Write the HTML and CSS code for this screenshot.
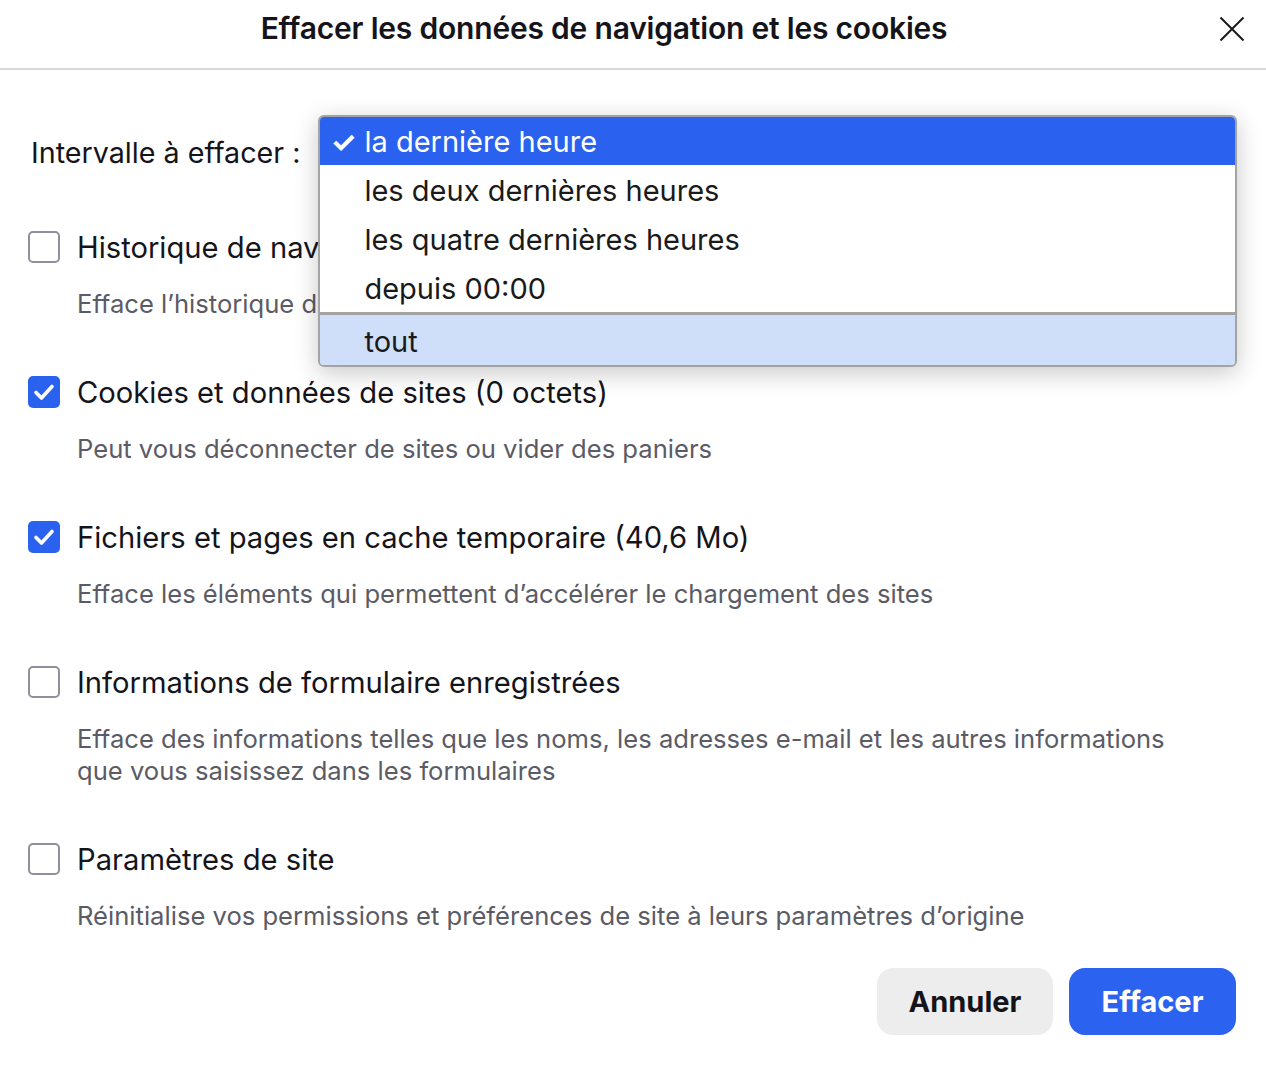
FILE: index.html
```html
<!DOCTYPE html>
<html lang="fr">
<head>
  <meta charset="UTF-8">
  <meta name="viewport" content="width=device-width, initial-scale=1.0">
  <title>Effacer les données de navigation et les cookies</title>
  <link rel="stylesheet" href="styles.css">
</head>
<body>
  <div class="dialog">
    <header class="dialog-header">
      <h1>Effacer les données de navigation et les cookies</h1>
      <button class="close" aria-label="Fermer">
        <svg width="26" height="26" viewBox="0 0 26 26">
          <path d="M1.5 1.5 L24.5 24.5 M24.5 1.5 L1.5 24.5" stroke="#1a1a1a" stroke-width="2" fill="none"/>
        </svg>
      </button>
    </header>

    <div class="content">
      <div class="interval">
        <span class="interval-label">Intervalle à effacer :</span>
        <div class="select-wrap">
          <ul class="menu">
            <li class="selected"><span class="tick">✓</span>la dernière heure</li>
            <li>les deux dernières heures</li>
            <li>les quatre dernières heures</li>
            <li>depuis 00:00</li>
            <li class="hover">tout</li>
          </ul>
        </div>
      </div>

      <div class="item">
        <div class="item-row">
          <span class="box"></span>
          <span class="item-label">Historique de navigation</span>
        </div>
        <p class="item-desc">Efface l’historique de navigation</p>
      </div>

      <div class="item">
        <div class="item-row">
          <span class="box checked">
            <svg width="32" height="32" viewBox="0 0 32 32"><path d="M8 16.5 L13.5 22 L24 10.5" stroke="#fff" stroke-width="3.6" fill="none" stroke-linecap="round" stroke-linejoin="round"/></svg>
          </span>
          <span class="item-label">Cookies et données de sites (0 octets)</span>
        </div>
        <p class="item-desc">Peut vous déconnecter de sites ou vider des paniers</p>
      </div>

      <div class="item">
        <div class="item-row">
          <span class="box checked">
            <svg width="32" height="32" viewBox="0 0 32 32"><path d="M8 16.5 L13.5 22 L24 10.5" stroke="#fff" stroke-width="3.6" fill="none" stroke-linecap="round" stroke-linejoin="round"/></svg>
          </span>
          <span class="item-label">Fichiers et pages en cache temporaire (40,6 Mo)</span>
        </div>
        <p class="item-desc">Efface les éléments qui permettent d’accélérer le chargement des sites</p>
      </div>

      <div class="item">
        <div class="item-row">
          <span class="box"></span>
          <span class="item-label">Informations de formulaire enregistrées</span>
        </div>
        <p class="item-desc">Efface des informations telles que les noms, les adresses e-mail et les autres informations que vous saisissez dans les formulaires</p>
      </div>

      <div class="item">
        <div class="item-row">
          <span class="box"></span>
          <span class="item-label">Paramètres de site</span>
        </div>
        <p class="item-desc">Réinitialise vos permissions et préférences de site à leurs paramètres d’origine</p>
      </div>

      <div class="actions">
        <button class="btn btn-cancel">Annuler</button>
        <button class="btn btn-primary">Effacer</button>
      </div>
    </div>
  </div>
</body>
</html>
```

FILE: styles.css
```css
body {
  margin: 0;
  font-family: Inter, "Noto Sans", sans-serif;
  background: #fff;
  color: #1a1a1a;
}

.dialog {
  width: 1266px;
}

.dialog-header {
  position: relative;
  height: 68px;
  border-bottom: 2px solid #d9d9dc;
  display: flex;
  justify-content: center;
  align-items: flex-start;
  padding-right: 58px;
}

.dialog-header h1 {
  margin: 10px 0 0;
  font-size: 30px;
  line-height: 36px;
  font-weight: 600;
  letter-spacing: -0.2px;
  color: #15141a;
}

.close {
  position: absolute;
  right: 20px;
  top: 15px;
  width: 28px;
  height: 28px;
  padding: 1px;
  border: none;
  background: none;
}

.content {
  padding: 58px 30px 0 28px;
}

.interval {
  display: flex;
  align-items: center;
  height: 48px;
  margin-bottom: 55px;
}

.interval-label {
  font-size: 28.7px;
  margin-left: 3px;
  color: #15141a;
}

.select-wrap {
  position: relative;
  flex: 1;
  height: 48px;
}

.menu {
  position: absolute;
  left: 18px;
  right: -1px;
  top: -13px;
  margin: 0;
  padding: 0;
  list-style: none;
  background: #fff;
  border: 2px solid #a3a3a3;
  border-radius: 6px;
  box-shadow: 0 6px 24px rgba(0, 0, 0, 0.22);
  z-index: 2;
}

.menu li {
  height: 49px;
  line-height: 52px;
  padding-left: 44px;
  font-size: 29px;
  color: #1a1a1a;
  position: relative;
}

.menu li.selected {
  height: 48px;
  line-height: 50px;
  background: #2a62ef;
  color: #fff;
  border-radius: 4px 4px 0 0;
}

.menu .tick {
  position: absolute;
  left: 10px;
  font-weight: 700;
}

.menu li.hover {
  background: #d0dff9;
  border-top: 3px solid #a3a3a3;
  border-radius: 0 0 4px 4px;
  line-height: 53px;
  height: 50px;
}

.item {
  margin-bottom: 56px;
}

.item-row {
  display: flex;
  align-items: center;
  height: 32px;
}

.box {
  width: 32px;
  height: 32px;
  box-sizing: border-box;
  border: 2px solid #8f8f9d;
  border-radius: 5px;
  margin-right: 17px;
  display: flex;
  align-items: center;
  justify-content: center;
  flex-shrink: 0;
}

.box.checked {
  border: none;
  background: #2a62ef;
}

.item-label {
  font-size: 29.2px;
  color: #15141a;
}

.item-desc {
  margin: 25px 0 0 49px;
  max-width: 1110px;
  font-size: 25.6px;
  line-height: 32px;
  color: #5b5b66;
}

.actions {
  display: flex;
  justify-content: flex-end;
  gap: 16px;
  margin-top: -20px;
}

.btn {
  height: 67px;
  border: none;
  border-radius: 16px;
  font-family: Inter, sans-serif;
  font-size: 29px;
  font-weight: 700;
}

.btn-cancel {
  width: 176px;
  background: #ededed;
  color: #15141a;
}

.btn-primary {
  width: 167px;
  background: #2b63f0;
  color: #fff;
}
```
